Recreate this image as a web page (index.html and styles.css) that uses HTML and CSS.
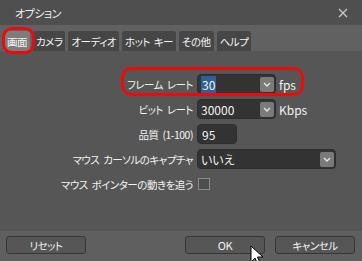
FILE: index.html
```html
<!DOCTYPE html>
<html lang="ja">
<head>
    <meta charset="UTF-8">
    <title>オプション</title>
    <link rel="stylesheet" href="styles.css">
</head>
<body>
    <div class="window">
        <div class="titlebar">
            <span class="title">オプション</span>
            <svg class="close" width="10" height="10" viewBox="0 0 10 10">
                <path d="M1 1 L9 9 M9 1 L1 9" stroke="#c9c9c9" stroke-width="1.3" fill="none"/>
            </svg>
        </div>

        <div class="tabs">
            <div class="tab active">画面</div>
            <div class="tab">カメラ</div>
            <div class="tab">オーディオ</div>
            <div class="tab">ホット キー</div>
            <div class="tab">その他</div>
            <div class="tab">ヘルプ</div>
        </div>

        <div class="content">
            <div class="form">
                <label>フレーム レート</label>
                <div class="field-row">
                    <div class="combo combo-short">
                        <span class="value"><span class="selected">30</span></span>
                        <span class="drop"><svg width="8" height="5" viewBox="0 0 8 5"><path d="M1 1 L4 4 L7 1" stroke="#e6e6e6" stroke-width="1.4" fill="none"/></svg></span>
                    </div>
                    <span class="unit">fps</span>
                </div>

                <label>ビット レート</label>
                <div class="field-row">
                    <div class="combo combo-short">
                        <span class="value">30000</span>
                        <span class="drop"><svg width="8" height="5" viewBox="0 0 8 5"><path d="M1 1 L4 4 L7 1" stroke="#e6e6e6" stroke-width="1.4" fill="none"/></svg></span>
                    </div>
                    <span class="unit">Kbps</span>
                </div>

                <label>品質 (1-100)</label>
                <div class="field-row">
                    <div class="input">95</div>
                </div>

                <label>マウス カーソルのキャプチャ</label>
                <div class="field-row">
                    <div class="combo combo-wide">
                        <span class="value">いいえ</span>
                        <span class="drop"><svg width="8" height="5" viewBox="0 0 8 5"><path d="M1 1 L4 4 L7 1" stroke="#e6e6e6" stroke-width="1.4" fill="none"/></svg></span>
                    </div>
                </div>

                <label>マウス ポインターの動きを追う</label>
                <div class="field-row">
                    <span class="checkbox"></span>
                </div>
            </div>
        </div>

        <div class="footer">
            <button class="btn">リセット</button>
            <button class="btn btn-ok">OK</button>
            <button class="btn">キャンセル</button>
        </div>

        <!-- annotations over the screenshot -->
        <div class="mark mark-tab"></div>
        <div class="mark mark-fps"></div>
        <svg class="cursor" width="14" height="22" viewBox="0 0 14 22">
            <path d="M1 1 L1 17 L5 13 L8 20 L10.5 19 L7.5 12 L13 12 Z" fill="#fff" stroke="#000" stroke-width="1"/>
        </svg>
    </div>
</body>
</html>
```

FILE: styles.css
```css
* {
    margin: 0;
    padding: 0;
    box-sizing: border-box;
}

body {
    font-family: "Noto Sans CJK JP", "Noto Sans", sans-serif;
    font-feature-settings: "palt";
    font-size: 10.5px;
    letter-spacing: -0.5px;
    word-spacing: 2px;
    color: #f2f2f2;
    background: #565656;
}

.window {
    position: relative;
    width: 362px;
    height: 261px;
    overflow: hidden;
    background: #565656;
}

.titlebar {
    height: 25px;
    display: flex;
    align-items: center;
    justify-content: space-between;
    padding: 0 14px 0 15px;
    background: #4f4f4f;
}

.title {
    font-size: 11px;
    color: #f0f0f0;
}

.tabs {
    height: 26px;
    display: flex;
    align-items: flex-end;
    gap: 3px;
    padding: 0 4px;
    background: #616161;
}

.tab {
    height: 20px;
    padding: 0 3px;
    display: flex;
    align-items: center;
    background: #464646;
    border-radius: 3px 3px 0 0;
    color: #f4f4f4;
    white-space: nowrap;
}

.tab.active {
    background: #7c7c7c;
}

.content {
    height: 180px;
    padding-top: 23px;
}

.form {
    display: grid;
    grid-template-columns: 193px 1fr;
    grid-auto-rows: 20px;
    column-gap: 4px;
    row-gap: 5px;
    align-items: center;
}

.form label {
    text-align: right;
    white-space: nowrap;
}

.field-row {
    display: flex;
    align-items: center;
    gap: 3px;
}

.combo,
.input,
.unit {
    font-size: 12px;
    letter-spacing: 0;
}

.combo,
.input {
    height: 20px;
    background: #333333;
    border: 1px solid #2d2d2d;
    border-radius: 4px;
    display: flex;
    align-items: center;
    padding-left: 2px;
}

.combo-short {
    width: 79px;
}

.combo-wide {
    width: 139px;
}

.input {
    width: 40px;
    padding-left: 4px;
}

.value {
    flex: 1;
    padding-left: 1px;
}

.selected {
    background: #2f5f95;
    padding: 0 1px;
}

.drop {
    width: 14px;
    height: 15px;
    margin-right: 1px;
    background: #7a7a7a;
    border-radius: 2px;
    display: flex;
    align-items: center;
    justify-content: center;
}

.unit {
    color: #f2f2f2;
}

.checkbox {
    width: 12px;
    height: 12px;
    margin-left: 1px;
    border: 1px solid #8a8a8a;
    background: #4e4e4e;
}

.footer {
    height: 30px;
    display: flex;
    align-items: flex-start;
    padding: 5px 7px 0 6px;
    gap: 10px;
    background: #5f5f5f;
}

.btn {
    width: 80px;
    height: 18px;
    font: inherit;
    letter-spacing: inherit;
    word-spacing: inherit;
    color: #f2f2f2;
    background: #565656;
    border: 1px solid #363636;
    border-radius: 3px;
}

.btn-ok {
    margin-left: auto;
    font-size: 11px;
}

.mark {
    position: absolute;
    border: 3px solid #ee0a0a;
    border-radius: 10px;
}

.mark-tab {
    left: 2px;
    top: 27px;
    width: 33px;
    height: 27px;
}

.mark-fps {
    left: 121px;
    top: 67px;
    width: 183px;
    height: 29px;
}

.cursor {
    position: absolute;
    left: 250px;
    top: 245px;
}
```
